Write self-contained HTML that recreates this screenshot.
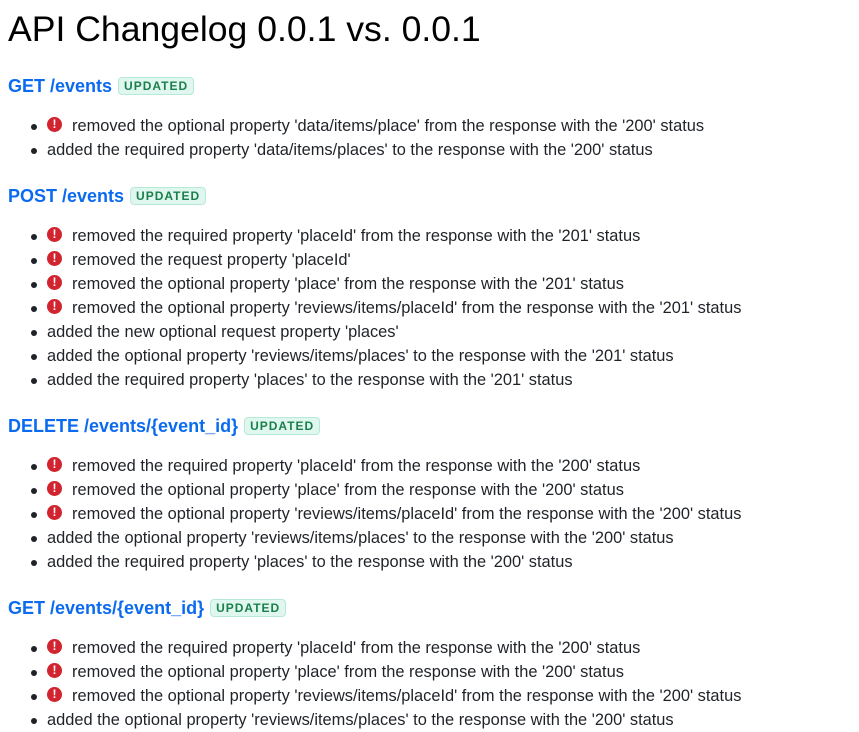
<!DOCTYPE html>
<html><head><meta charset="utf-8"><style>
body{margin:0;width:859px;height:732px;background:#fff;font-family:"Liberation Sans",sans-serif;position:relative;overflow:hidden}
.t{position:absolute;left:8px;top:9px;font-size:35.6px;color:#000;line-height:40px;white-space:nowrap}
.h{position:absolute;left:8px;font-size:18px;font-weight:bold;color:#0b6bf0;line-height:20px;white-space:nowrap;height:20px;display:flex;align-items:center}
.b{display:inline-block;margin-left:6px;font-size:12px;font-weight:bold;letter-spacing:1px;color:#1a7f4b;background:#e0f7ef;border:1px solid #b7ead6;border-radius:4px;padding:1px 5px;line-height:14px}
.i{position:absolute;left:47px;font-size:16.4px;color:#1f2328;line-height:20px;white-space:nowrap;height:20px}
.i:before{content:"";position:absolute;left:-16px;top:8px;width:6px;height:6px;border-radius:50%;background:#1f2328}
.e{display:inline-block;width:15px;height:15px;border-radius:50%;background:#d1242f;color:#fff;font-size:12px;font-weight:bold;text-align:center;line-height:15px;vertical-align:3px;margin-right:10px;margin-left:0}
</style></head><body>
<div class="t">API Changelog 0.0.1 vs. 0.0.1</div>

<div class="h" style="top:76px">GET /events<span class="b">UPDATED</span></div>
<div class="i" style="top:116px"><span class="e">!</span>removed the optional property 'data/items/place' from the response with the '200' status</div>
<div class="i" style="top:140px">added the required property 'data/items/places' to the response with the '200' status</div>

<div class="h" style="top:186px">POST /events<span class="b">UPDATED</span></div>
<div class="i" style="top:226px"><span class="e">!</span>removed the required property 'placeId' from the response with the '201' status</div>
<div class="i" style="top:250px"><span class="e">!</span>removed the request property 'placeId'</div>
<div class="i" style="top:274px"><span class="e">!</span>removed the optional property 'place' from the response with the '201' status</div>
<div class="i" style="top:298px"><span class="e">!</span>removed the optional property 'reviews/items/placeId' from the response with the '201' status</div>
<div class="i" style="top:322px">added the new optional request property 'places'</div>
<div class="i" style="top:346px">added the optional property 'reviews/items/places' to the response with the '201' status</div>
<div class="i" style="top:370px">added the required property 'places' to the response with the '201' status</div>

<div class="h" style="top:416px">DELETE /events/{event_id}<span class="b">UPDATED</span></div>
<div class="i" style="top:456px"><span class="e">!</span>removed the required property 'placeId' from the response with the '200' status</div>
<div class="i" style="top:480px"><span class="e">!</span>removed the optional property 'place' from the response with the '200' status</div>
<div class="i" style="top:504px"><span class="e">!</span>removed the optional property 'reviews/items/placeId' from the response with the '200' status</div>
<div class="i" style="top:528px">added the optional property 'reviews/items/places' to the response with the '200' status</div>
<div class="i" style="top:552px">added the required property 'places' to the response with the '200' status</div>

<div class="h" style="top:598px">GET /events/{event_id}<span class="b">UPDATED</span></div>
<div class="i" style="top:638px"><span class="e">!</span>removed the required property 'placeId' from the response with the '200' status</div>
<div class="i" style="top:662px"><span class="e">!</span>removed the optional property 'place' from the response with the '200' status</div>
<div class="i" style="top:686px"><span class="e">!</span>removed the optional property 'reviews/items/placeId' from the response with the '200' status</div>
<div class="i" style="top:710px">added the optional property 'reviews/items/places' to the response with the '200' status</div>
</body></html>
